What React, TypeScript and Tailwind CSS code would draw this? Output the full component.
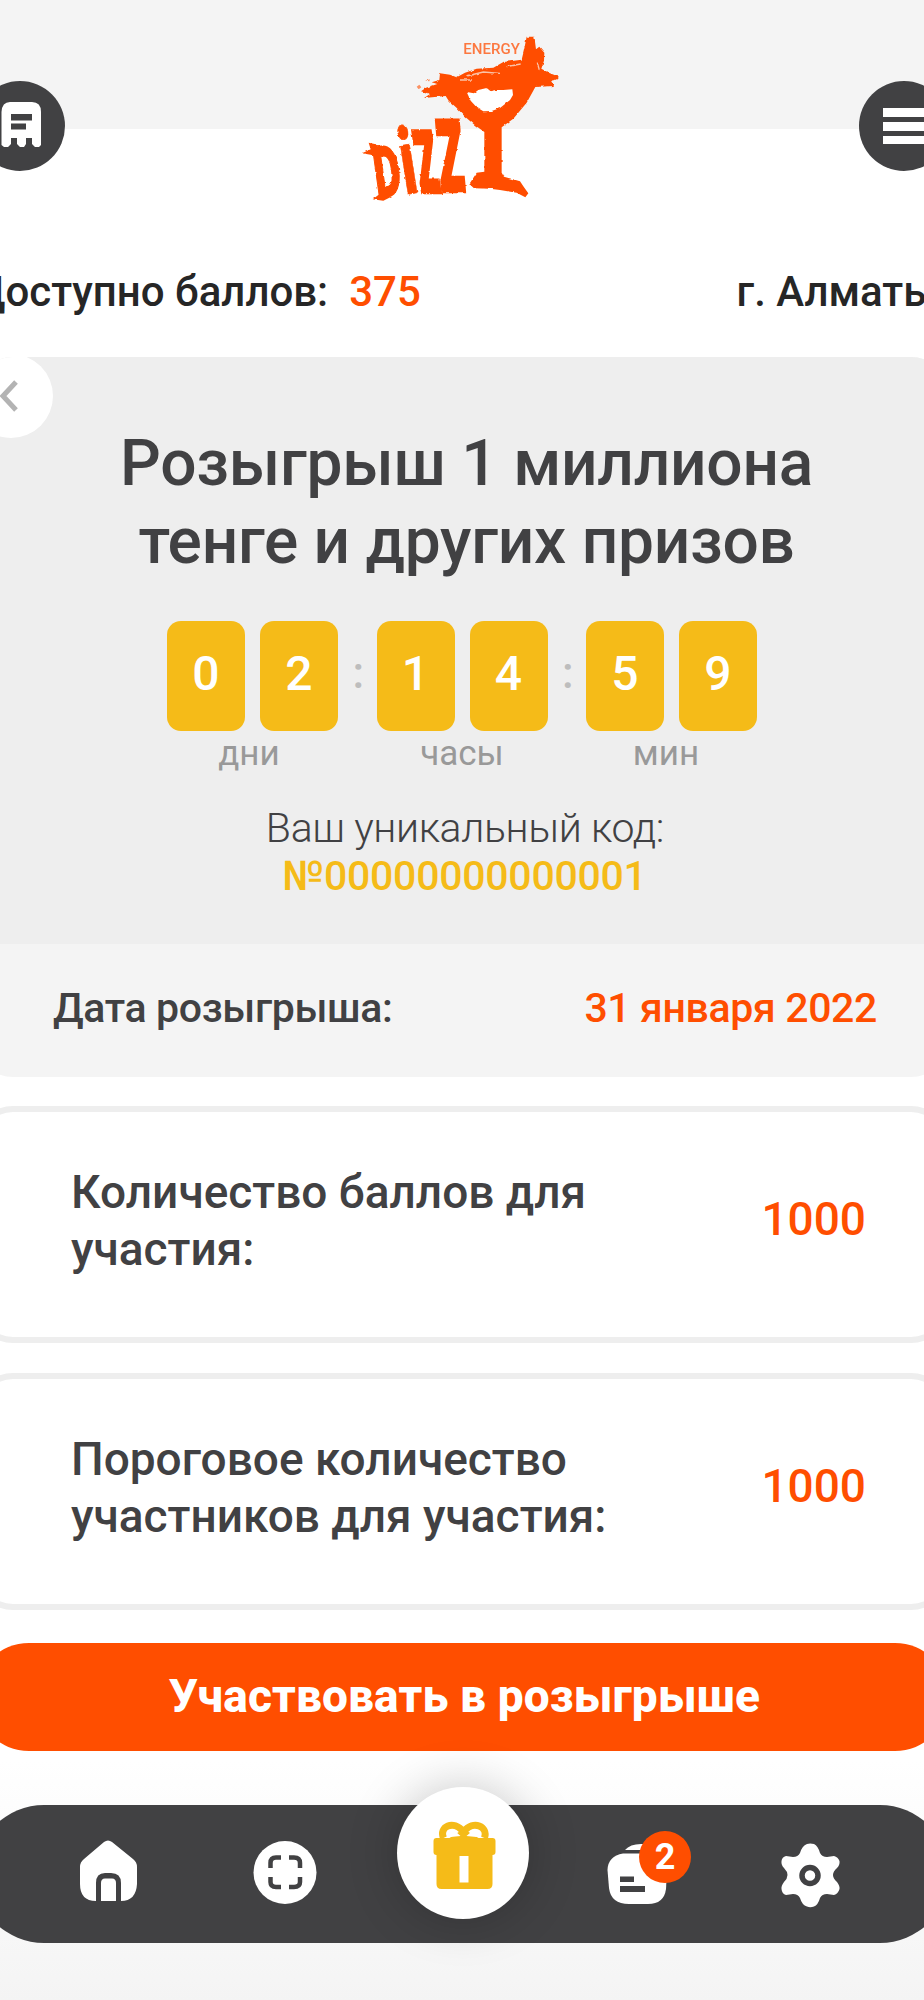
import { ReactNode } from "react";

interface CountdownGroup {
    label: string;
    labelClass: string;
    digits: string[];
}

interface InfoCardProps {
    title: ReactNode;
    value: string;
}

const countdown: CountdownGroup[] = [
    { label: "дни", labelClass: "pr-[7px]", digits: ["0", "2"] },
    { label: "часы", labelClass: "", digits: ["1", "4"] },
    { label: "мин", labelClass: "pr-[11px]", digits: ["5", "9"] },
];

const Logo = () => (
    <svg className="w-[230px] h-[200px] mt-[20px] ml-[6px]" viewBox="0 0 690 600">
        <defs>
            <filter id="rough" x="-5%" y="-5%" width="110%" height="110%">
                <feTurbulence type="fractalNoise" baseFrequency="0.07" numOctaves="2" seed="4" />
                <feDisplacementMap in="SourceGraphic" scale="8" xChannelSelector="R" yChannelSelector="G" />
            </filter>
        </defs>
        <text
            x="340"
            y="101"
            fontSize="46"
            textLength="170"
            lengthAdjust="spacingAndGlyphs"
            fill="#ff5a14"
            opacity="0.8"
            className="font-medium"
        >
            ENERGY
        </text>
        <g filter="url(#rough)" fill="#ff4e00">
            <path d="M270 160L300 164L320 172L345 158L380 146L430 143L460 126L515 119L522 90L530 50L553 50L558 88L568 80L583 98L582 122L574 146L600 160L627 170L624 178L603 182L612 198L556 201L530 248L490 296L455 322L455 458L462 470L510 484L522 502L535 520L526 532L500 518L450 510L420 506L372 505L358 492L380 458L403 455L403 336L375 316L345 290L318 262L296 242L287 228L222 234L240 222L213 214L228 203L262 192L245 187L268 180Z" />
            <path d="M200 200L208 194L214 202L206 208ZM225 182L240 178L238 184Z" opacity="0.6" />
            <path
                d="M350 216L372 220L385 210L410 204L422 214L440 210L460 210L487 208L489 225L480 240L450 264L425 273L400 274L380 262L362 242Z"
                fill="#ffffff"
            />
            <path
                d="M350 168L400 156L450 160M470 140L512 132M330 180L366 180M562 128L568 150"
                fill="none"
                stroke="#fbc3a8"
                strokeWidth="4"
            />
            <path d="M36 400L62 388L56 368L74 372L92 392L84 410L62 404ZM68 538L92 520L124 530L100 542Z" />
            <g stroke="#ff4e00" className="font-black">
                <text transform="translate(82 533) rotate(-8) scale(0.58 1)" fontSize="212" strokeWidth="5">
                    D
                </text>
                <text transform="translate(165 524) rotate(-9) scale(0.6 1)" fontSize="280" strokeWidth="2">
                    i
                </text>
                <text transform="translate(212 517) skewX(9) scale(0.4 1)" fontSize="255" strokeWidth="14">
                    Z
                </text>
                <text transform="translate(272 512) skewX(5) scale(0.42 1)" fontSize="296" strokeWidth="14">
                    Z
                </text>
            </g>
        </g>
    </svg>
);

const Header = () => (
    <header className="h-[129px] bg-[#f4f4f4] flex justify-between items-start">
        <button className="mt-[81px] w-[90px] h-[90px]">
            <svg viewBox="0 0 90 90">
                <circle cx="45" cy="45" r="45" fill="#414143" />
                <path
                    d="M35 21H57Q66 21 66 31V64L64 66H60L57 63V57H51V63L49 66H45L42 63V57H36V63L33 66H29L26.500 64V31Q27 21 35 21Z"
                    fill="#fff"
                />
                <path d="M36 33H57V39.500H36ZM36 42.500H51V48.500H36Z" fill="#414143" />
            </svg>
        </button>
        <Logo />
        <button className="mt-[81px] w-[90px] h-[90px]">
            <svg viewBox="0 0 90 90">
                <circle cx="45" cy="45" r="45" fill="#414143" />
                <path d="M24 27H66V36H24ZM24 41H66V50H24ZM24 55H66V63H24Z" fill="#fff" />
            </svg>
        </button>
    </header>
);

const Countdown = () => (
    <div className="flex justify-center mt-[40px]">
        {countdown.map((group, index) => (
            <div key={group.label} className="flex">
                {index > 0 && (
                    <span className="w-[38.500px] pl-[2px] text-center text-[44px] leading-[104px] font-medium text-[#bdbdbd]">
                        :
                    </span>
                )}
                <div className="flex flex-col items-center">
                    <div className="flex gap-[15px]">
                        {group.digits.map((digit, i) => (
                            <span
                                key={i}
                                className="w-[78px] h-[110px] rounded-[14px] bg-[#f5bb18] text-white text-[48px] leading-[106px] font-medium text-center"
                            >
                                {digit}
                            </span>
                        ))}
                    </div>
                    <span className={`mt-[2px] text-[35px] leading-[42px] text-[#999999] ${group.labelClass}`}>
                        {group.label}
                    </span>
                </div>
            </div>
        ))}
    </div>
);

const InfoCard = ({ title, value }: InfoCardProps) => (
    <div className="h-[237px] border-[6px] border-[#eeeeee] rounded-[38px] flex items-center justify-between pl-[90px] pr-[77px] pb-[8px] text-[46px] leading-[57px] font-medium">
        <p className="text-[#414143]">{title}</p>
        <p className="text-[#ff4e00] -mt-[2px]">{value}</p>
    </div>
);

const BottomNav = () => (
    <nav className="relative h-[138px] rounded-full bg-[#414143]">
        <svg className="w-[974px] h-[138px]" viewBox="-25 1805 974 138">
            <path
                d="M104 1842Q108 1839 112 1842L133 1859Q137 1862 137 1867V1884Q136 1901 121 1901V1883Q121 1873 111 1873H105Q96 1873 96 1883V1901Q80 1901 80 1884V1867Q80 1862 84 1859Z"
                fill="#fff"
            />
            <path d="M101 1901V1883Q101 1878.500 105 1878.500H112Q116 1878.500 116 1883V1901Z" fill="#fff" />
            <circle cx="285" cy="1872.500" r="31.500" fill="#fff" />
            <path
                d="M281 1857.500H276Q270.500 1857.500 270.500 1863V1868M289 1857.500H294Q300 1857.500 300 1863V1868M281 1887H276Q270.500 1887 270.500 1882V1877M289 1887H294Q300 1887 300 1882V1877"
                fill="none"
                stroke="#414143"
                strokeWidth="4.500"
            />
            <path d="M625 1850Q630 1844 641 1844H652V1850Z" fill="#fff" />
            <path
                d="M623 1853.500H650Q667 1855 667 1870L666 1889Q664 1904 648 1904H629Q611 1904 609 1888L607.500 1870Q608 1856 623 1853.500Z"
                fill="#fff"
            />
            <path d="M620 1876.500H634V1882H620ZM620 1886H645V1892H620Z" fill="#414143" />
            <path
                d="M807 1844Q810 1843 814 1844Q818 1846 820 1853Q822 1857 827 1857L834 1856Q838 1857 839.500 1861Q840 1865 837 1868Q829 1875 837 1882Q840 1886 839.500 1889Q838 1894 834 1895L827 1894Q822 1894 820 1898Q818 1905 814 1906.500Q810 1908 807 1906.500Q802 1905 800 1898Q798 1894 793 1894L786 1895Q782 1894 781.500 1889Q781 1886 784 1882Q791 1875 784 1868Q781 1865 781.500 1861Q782 1857 786 1856L793 1857Q798 1857 800 1853Q802 1846 807 1844Z"
                fill="#fff"
            />
            <circle cx="810" cy="1875.500" r="8" fill="none" stroke="#414143" strokeWidth="5.500" />
        </svg>
        <span className="absolute left-[664px] top-[26px] w-[52px] h-[52px] rounded-full bg-[#ff4e00] text-white text-[36px] leading-[52px] font-bold text-center">
            2
        </span>
        <button className="absolute left-[422px] -top-[18px] w-[132px] h-[132px] rounded-full bg-white shadow-[0_0_50px_rgba(0,0,0,0.22)]">
            <svg viewBox="397.500 1787 132 132">
                <path
                    d="M444 1838C439 1827 454 1819 464 1832C474 1819 489 1827 485 1838"
                    fill="none"
                    stroke="#f5bb18"
                    strokeWidth="7"
                />
                <path d="M450 1838L464 1829L479 1838V1842H450Z" fill="#f5bb18" />
                <path d="M451 1837Q446 1830 452 1830Q457 1832 461 1836ZM477 1837Q483 1830 477 1830Q471 1832 467 1836Z" fill="#fff" />
                <path
                    d="M437 1838H493Q496 1838 496 1841V1852Q496 1855 493 1855V1884Q493 1889 488 1889H442Q437 1889 437 1884V1855Q434 1855 434 1852V1841Q434 1838 437 1838Z"
                    fill="#f5bb18"
                />
                <path d="M460 1856H469V1882.500H460Z" fill="#fff" />
            </svg>
        </button>
    </nav>
);

const App = () => {
    return (
        <div className="w-[924px] h-[2000px] overflow-hidden bg-white font-['Roboto',sans-serif]">
            <div className="w-[974px] h-full -ml-[25px] flex flex-col bg-[linear-gradient(to_bottom,#ffffff_1760px,#f4f4f4_2000px)]">
                <Header />

                <div className="mt-[139px] pr-[12px] flex justify-between text-[42px] leading-[48px] font-medium text-[#262626] whitespace-nowrap">
                    <p className="-ml-px">
                        Доступно баллов:
                        <span className="ml-[21px] text-[#ff4e00]">375</span>
                    </p>
                    <p>г. Алматы</p>
                </div>

                <section className="relative mt-[41px] h-[720px] rounded-[38px] overflow-hidden bg-[#f4f4f4] text-[#414143]">
                    <button className="absolute -left-[6px] -top-[3px] w-[84px] h-[84px] rounded-full bg-white">
                        <svg viewBox="0 0 84 84">
                            <path d="M47 28L34 42L47 56" fill="none" stroke="#b3b3b3" strokeWidth="5" />
                        </svg>
                    </button>
                    <div className="h-[587px] pt-[68px] bg-[#eeeeee] text-center">
                        <h1 className="pl-[9px] text-[64px] leading-[78px] tracking-[-0.25px] font-medium">
                            Розыгрыш 1 миллиона
                            <br />
                            тенге и других призов
                        </h1>
                        <Countdown />
                        <p className="mt-[29px] pl-[6px] text-[41px] leading-[48px] tracking-[-0.35px] font-light">
                            Ваш уникальный код:
                        </p>
                        <p className="pl-[5px] text-[41px] leading-[48px] tracking-[-0.25px] font-medium text-[#f5bb18]">
                            №00000000000001
                        </p>
                    </div>
                    <div className="h-[133px] pl-[78px] pr-[72px] pb-[5px] flex items-center justify-between text-[41px] leading-[48px] tracking-[-0.35px] font-medium">
                        <p>Дата розыгрыша:</p>
                        <p className="text-[#ff4e00]">31 января 2022</p>
                    </div>
                </section>

                <div className="mt-[29px] flex flex-col gap-[30px]">
                    <InfoCard
                        title={
                            <>
                                Количество баллов для
                                <br />
                                участия:
                            </>
                        }
                        value="1000"
                    />
                    <InfoCard
                        title={
                            <>
                                Пороговое количество
                                <br />
                                участников для участия:
                            </>
                        }
                        value="1000"
                    />
                </div>

                <button className="mt-[33px] mb-[54px] h-[108px] shrink-0 rounded-full pl-[5px] pb-[2px] bg-[#ff4e00] text-white text-[46px] leading-[56px] tracking-[0.15px] font-extrabold">
                    Участвовать в розыгрыше
                </button>

                <BottomNav />
            </div>
        </div>
    );
};

export default App;
